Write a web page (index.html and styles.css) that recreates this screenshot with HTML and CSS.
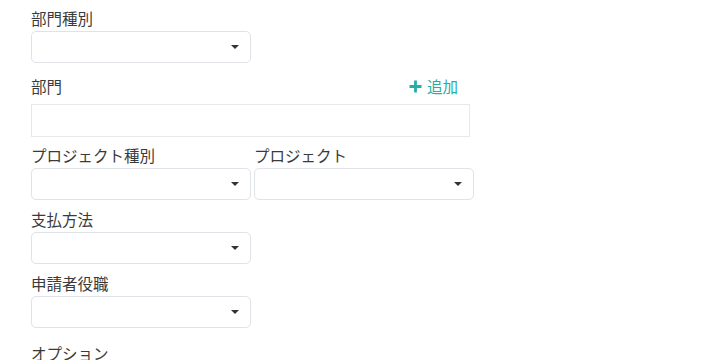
FILE: index.html
```html
<!DOCTYPE html>
<html lang="ja">
<head>
<meta charset="utf-8">
<link rel="stylesheet" href="styles.css">
</head>
<body>
<div class="form">
  <div class="group g1">
    <div class="label">部門種別</div>
    <div class="select"><span class="caret"></span></div>
  </div>
  <div class="group g2">
    <div class="label-row">
      <div class="label">部門</div>
      <a class="add"><svg width="13" height="13" viewBox="0 0 13 13"><path d="M6.5 0.5v12M0.5 6.5h12" stroke="#26aea5" stroke-width="2.8"/></svg><span>追加</span></a>
    </div>
    <div class="input"></div>
  </div>
  <div class="group">
    <div class="row">
      <div class="col">
        <div class="label">プロジェクト種別</div>
        <div class="select"><span class="caret"></span></div>
      </div>
      <div class="col">
        <div class="label">プロジェクト</div>
        <div class="select"><span class="caret"></span></div>
      </div>
    </div>
  </div>
  <div class="group">
    <div class="label">支払方法</div>
    <div class="select"><span class="caret"></span></div>
  </div>
  <div class="group g5">
    <div class="label">申請者役職</div>
    <div class="select"><span class="caret"></span></div>
  </div>
  <div class="group">
    <div class="label">オプション</div>
  </div>
</div>
</body>
</html>
```

FILE: styles.css
```css
html, body {
  margin: 0;
  padding: 0;
  background: #fff;
}
body {
  font-family: "Noto Sans CJK JP", "Noto Sans", sans-serif;
  font-size: 15.5px;
  line-height: 21px;
  color: #3a3a3a;
}
.form {
  padding: 9px 0 0 31px;
  width: 443px;
}
.group {
  margin-bottom: 10px;
}
.g1 {
  margin-bottom: 14px;
}
.g2 {
  margin-bottom: 9px;
}
.g5 {
  margin-bottom: 16px;
}
.label {
  height: 19px;
  line-height: 19px;
  padding-bottom: 2px;
  margin-bottom: 1px;
}
.select {
  position: relative;
  box-sizing: border-box;
  width: 220px;
  height: 32px;
  border: 1px solid #dfe3e8;
  border-radius: 5px;
  background: #fff;
}
.caret {
  position: absolute;
  right: 11px;
  top: 13px;
  width: 0;
  height: 0;
  border-left: 4px solid transparent;
  border-right: 4px solid transparent;
  border-top: 4px solid #333;
}
.label-row {
  display: flex;
  justify-content: space-between;
  align-items: flex-start;
  width: 427px;
  margin-bottom: 6px;
}
.label-row .label {
  margin-bottom: 0;
}
.add {
  display: flex;
  align-items: center;
  gap: 5px;
  color: #26aea5;
  font-size: 15.5px;
  line-height: 19px;
  padding-bottom: 2px;
}
.input {
  box-sizing: border-box;
  width: 439px;
  height: 33px;
  border: 1px solid #e8e8e8;
  background: #fff;
}
.row {
  display: flex;
  gap: 3px;
}
.col {
  width: 220px;
}
```
